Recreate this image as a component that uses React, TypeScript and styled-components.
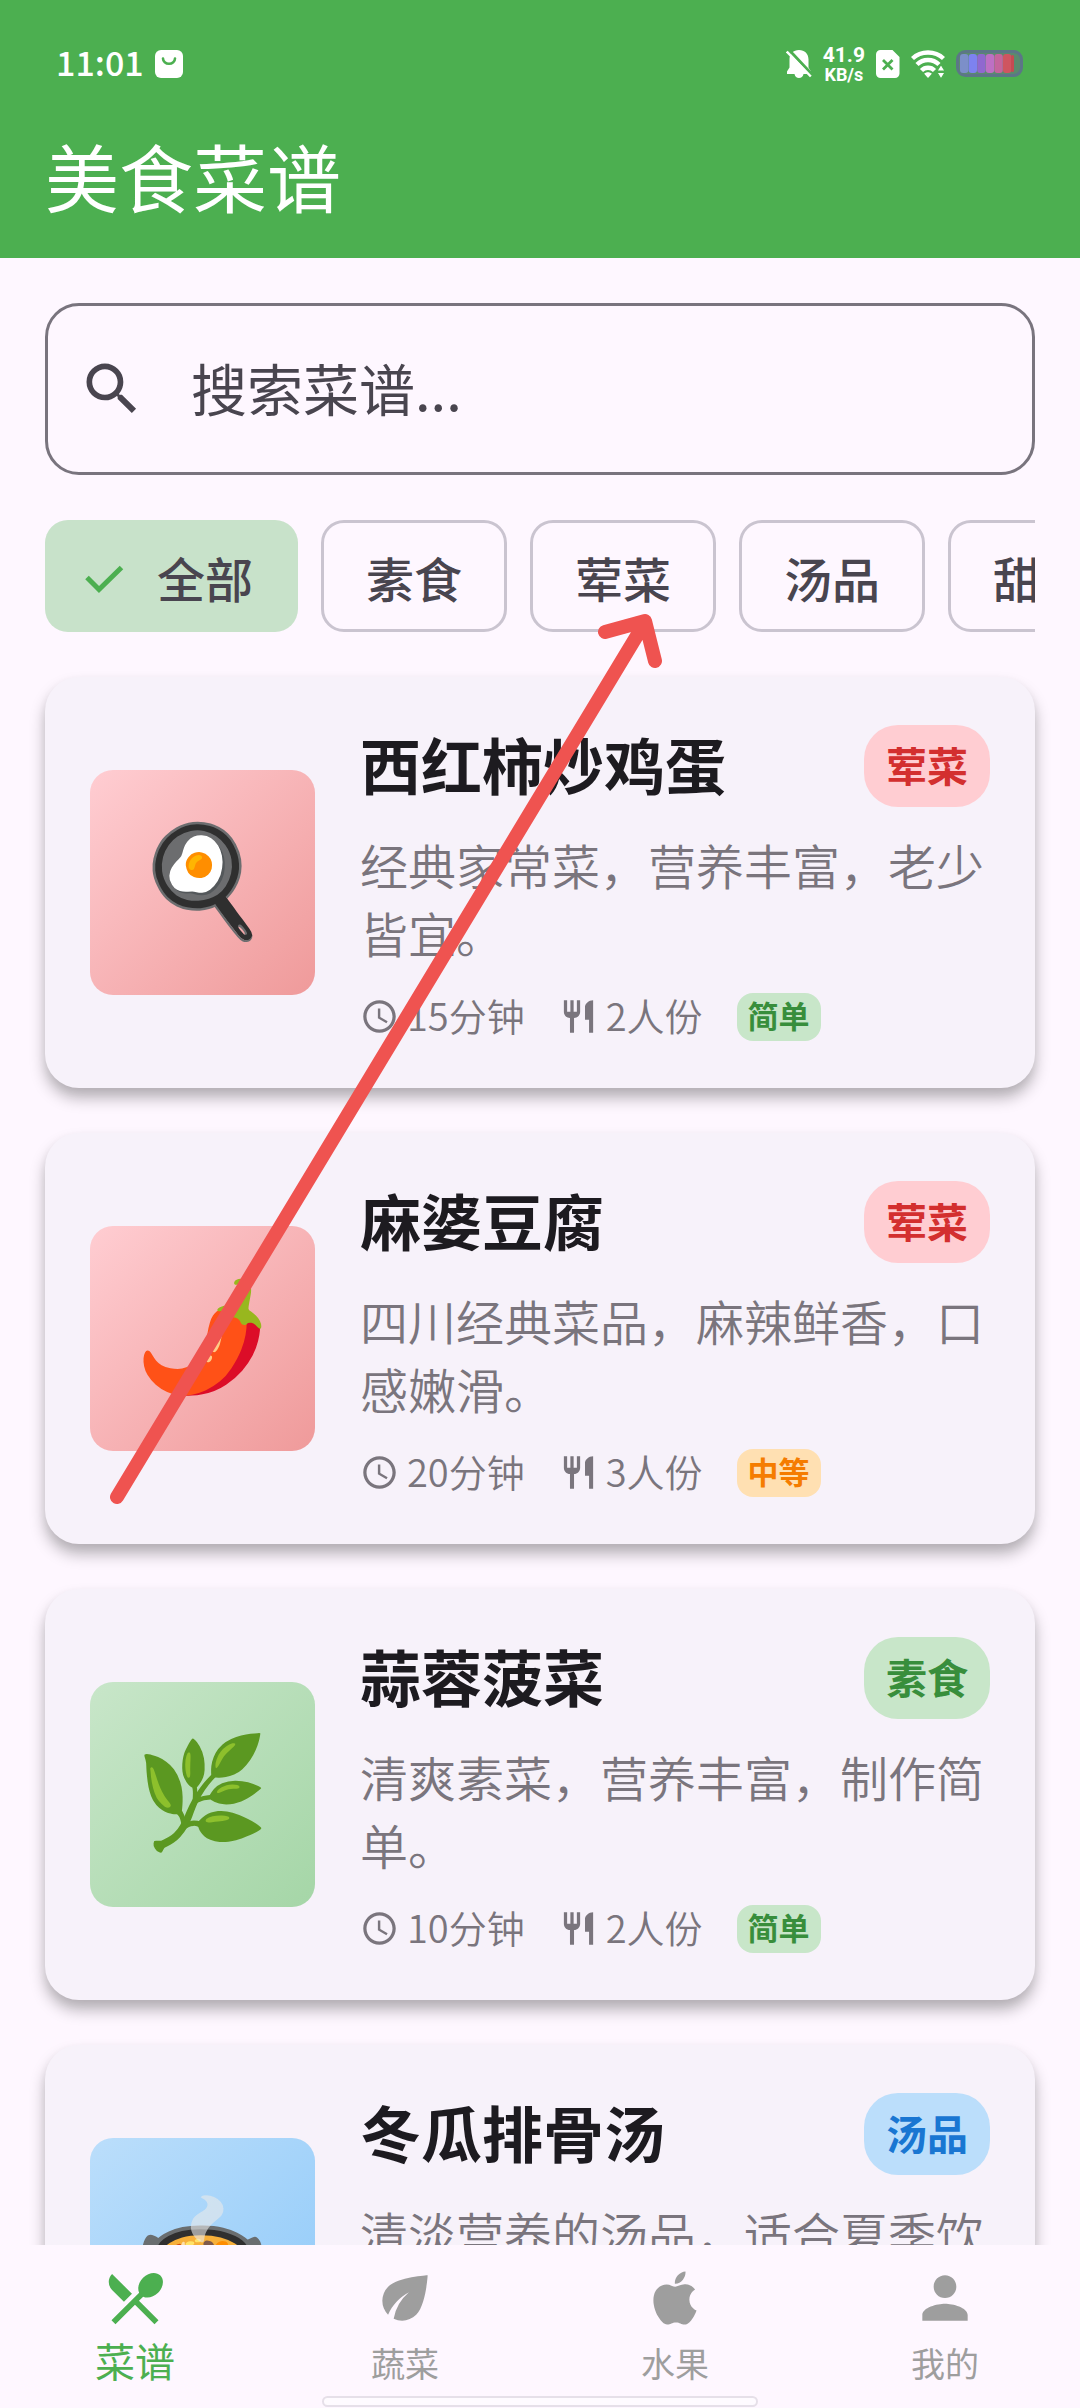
import React, { useState } from 'react';
import styled, { createGlobalStyle } from 'styled-components';
import {
  MdAccessTime,
  MdEco,
  MdPerson,
  MdRestaurant,
  MdRestaurantMenu,
  MdSearch,
} from 'react-icons/md';

const GlobalStyle = createGlobalStyle`
  * { box-sizing: border-box; }
  body {
    margin: 0;
    background: #fef7ff;
    font-family: "Noto Sans CJK SC", "Noto Sans", sans-serif;
    color: #1d1b20;
  }
  button, input { font: inherit; color: inherit; }
`;

const Screen = styled.div`
  position: relative;
  display: flex;
  flex-direction: column;
  height: 100vh;
  overflow: hidden;
  background: #fef7ff;
`;

const AppBar = styled.header`
  flex: none;
  padding: 40px 45px 28px;
  background: #4caf50;
  color: #ffffff;
`;

const StatusBar = styled.div`
  display: flex;
  align-items: center;
  justify-content: space-between;
  height: 48px;
  padding: 0 12px 0 11px;
`;

const StatusGroup = styled.div`
  display: flex;
  align-items: center;
  gap: 11px;
`;

const Clock = styled.span`
  padding-bottom: 4px;
  font-size: 34px;
  line-height: 48px;
  font-weight: 500;
`;

const NetSpeed = styled.span`
  display: flex;
  flex-direction: column;
  align-items: center;
  font-family: Roboto, sans-serif;
  font-weight: 700;
  font-size: 21px;
  line-height: 22px;
`;

const NetUnit = styled.span`
  font-size: 18px;
  line-height: 18px;
`;

const PageTitle = styled.h1`
  margin: 32px 0 0;
  font-size: 74px;
  line-height: 110px;
  font-weight: 400;
`;

const Main = styled.main`
  flex: 1;
  min-height: 0;
  display: flex;
  flex-direction: column;
  padding-top: 45px;
`;

const SearchBox = styled.label`
  flex: none;
  display: flex;
  align-items: center;
  gap: 45px;
  height: 172px;
  margin: 0 45px;
  padding: 0 30px;
  border: 3px solid #79747e;
  border-radius: 34px;
  color: #49454f;

  svg { flex: none; }
`;

const SearchInput = styled.input`
  flex: 1;
  min-width: 0;
  padding: 0 0 4px;
  border: 0;
  outline: 0;
  background: transparent;
  font-size: 56px;
  line-height: 84px;

  &::placeholder { color: #49454f; opacity: 1; }
`;

const ChipRow = styled.div`
  flex: none;
  display: flex;
  gap: 23px;
  margin: 45px 45px 0;
  overflow: hidden;
`;

const Chip = styled.button<{ $selected: boolean }>`
  flex: none;
  display: flex;
  align-items: center;
  gap: 28px;
  height: 112px;
  padding: ${(p) => (p.$selected ? '2px 45px 0 33px' : '2px 42px 0')};
  border: ${(p) => (p.$selected ? '0' : '3px solid #cac4d0')};
  border-radius: 23px;
  background: ${(p) => (p.$selected ? '#c8e2ca' : 'transparent')};
  color: #49454f;
  font-size: 48px;
  line-height: 68px;
  font-weight: 500;
  white-space: nowrap;
`;

const List = styled.ul`
  flex: 1;
  min-height: 0;
  display: flex;
  flex-direction: column;
  gap: 45px;
  margin: 0;
  padding: 45px 45px 0;
  overflow: hidden;
  list-style: none;
`;

const Card = styled.li`
  flex: none;
  display: flex;
  align-items: center;
  gap: 45px;
  padding: 45px;
  border-radius: 34px;
  background: #f7f2fa;
  box-shadow: 0 10px 15px rgba(0, 0, 0, 0.28), 0 4px 10px rgba(0, 0, 0, 0.04);
`;

const Thumb = styled.div<{ $from: string; $to: string }>`
  flex: none;
  display: flex;
  align-items: center;
  justify-content: center;
  width: 225px;
  height: 225px;
  padding-bottom: 4px;
  border-radius: 23px;
  background: linear-gradient(135deg, ${(p) => p.$from}, ${(p) => p.$to});
  font-family: "Noto Color Emoji", sans-serif;
  font-size: 108px;
  line-height: 120px;
`;

const Body = styled.div`
  flex: 1;
  min-width: 0;
  display: flex;
  flex-direction: column;
`;

const TitleRow = styled.div`
  display: flex;
  align-items: center;
  justify-content: space-between;
  height: 88px;
`;

const Name = styled.h2`
  margin: 0;
  padding-bottom: 4px;
  font-size: 61px;
  line-height: 84px;
  font-weight: 700;
`;

const KindBadge = styled.span<{ $bg: string; $fg: string }>`
  padding: 0 22px 4px;
  border-radius: 34px;
  background: ${(p) => p.$bg};
  color: ${(p) => p.$fg};
  font-size: 41px;
  line-height: 78px;
  font-weight: 700;
`;

const Desc = styled.p`
  margin: 20px 0 24px;
  color: #7a757d;
  font-size: 48px;
  line-height: 68px;
  font-weight: 350;
`;

const Meta = styled.div`
  display: flex;
  align-items: center;
  gap: 34px;
  height: 53px;
  color: #7a757d;
  font-size: 38px;
  line-height: 48px;
  font-weight: 350;
`;

const MetaItem = styled.span`
  display: flex;
  align-items: center;
  gap: 8px;
`;

const MetaText = styled.span`
  padding-bottom: 4px;
`;

const LevelBadge = styled.span<{ $bg: string; $fg: string }>`
  padding: 0 11px 4px;
  border-radius: 16px;
  background: ${(p) => p.$bg};
  color: ${(p) => p.$fg};
  font-size: 31px;
  line-height: 44px;
  font-weight: 700;
`;

const BottomNav = styled.nav`
  flex: none;
  display: flex;
  flex-direction: column;
  align-items: center;
  padding: 19px 0 1px;
  background: #fef7ff;
`;

const Tabs = styled.div`
  display: grid;
  grid-template-columns: repeat(4, 1fr);
  width: 100%;
`;

const Tab = styled.button<{ $active: boolean }>`
  display: flex;
  flex-direction: column;
  align-items: center;
  padding: 0;
  border: 0;
  background: none;
  color: ${(p) => (p.$active ? '#4caf50' : '#9e9e9e')};
  font-size: 40px;
  line-height: 56px;
`;

const TabLabel = styled.span<{ $active: boolean }>`
  display: block;

  span {
    font-size: ${(p) => (p.$active ? '40px' : '34px')};
    line-height: 40px;
  }
`;

const HomeBar = styled.div`
  width: 436px;
  max-width: 50%;
  height: 11px;
  margin-top: 8px;
  border: 2px solid #e6e0e9;
  border-radius: 6px;
  background: #fefbff;
`;

const Arrow = styled.svg`
  position: absolute;
  left: 0;
  top: 0;
  pointer-events: none;
`;

const tones = {
  meat: { from: '#ffcdd2', to: '#ef9a9a', bg: '#ffcdd2', fg: '#d32f2f' },
  veg: { from: '#c8e6c9', to: '#a5d6a7', bg: '#c8e6c9', fg: '#388e3c' },
  soup: { from: '#bbdefb', to: '#90caf9', bg: '#bbdefb', fg: '#1976d2' },
};

const levels: Record<string, { bg: string; fg: string }> = {
  简单: { bg: '#c8e6c9', fg: '#388e3c' },
  中等: { bg: '#ffe0b2', fg: '#f57c00' },
};

type Recipe = {
  name: string;
  kind: string;
  tone: keyof typeof tones;
  icon: string;
  desc: string;
  time: string;
  serves: string;
  level: string;
};

const recipes: Recipe[] = [
  { name: '西红柿炒鸡蛋', kind: '荤菜', tone: 'meat', icon: '🍳', desc: '经典家常菜，营养丰富，老少皆宜。', time: '15分钟', serves: '2人份', level: '简单' },
  { name: '麻婆豆腐', kind: '荤菜', tone: 'meat', icon: '🌶️', desc: '四川经典菜品，麻辣鲜香，口感嫩滑。', time: '20分钟', serves: '3人份', level: '中等' },
  { name: '蒜蓉菠菜', kind: '素食', tone: 'veg', icon: '🌿', desc: '清爽素菜，营养丰富，制作简单。', time: '10分钟', serves: '2人份', level: '简单' },
  { name: '冬瓜排骨汤', kind: '汤品', tone: 'soup', icon: '🍲', desc: '清淡营养的汤品，适合夏季饮用。', time: '60分钟', serves: '4人份', level: '中等' },
];

const categories = ['全部', '素食', '荤菜', '汤品', '甜品'];

function CheckIcon() {
  return (
    <svg width="51" height="51" viewBox="0 0 51 51" aria-hidden="true">
      <path d="M9 25.5L21 37.5L43.5 15.5" fill="none" stroke="#4caf50" strokeWidth="5" />
    </svg>
  );
}

function AppleIcon({ size }: { size: number }) {
  return (
    <svg width={size} height={size} viewBox="-0.8 -0.8 25.6 25.6" fill="currentColor" aria-hidden="true">
      <path d="M18.71 19.5c-.83 1.24-1.71 2.45-3.05 2.47-1.34.03-1.77-.79-3.29-.79-1.53 0-2 .77-3.27.82-1.31.05-2.3-1.32-3.14-2.53C4.25 17 2.94 12.45 4.7 9.39c.87-1.52 2.43-2.48 4.12-2.51 1.28-.02 2.5.87 3.29.87.78 0 2.26-1.07 3.81-.91.65.03 2.47.26 3.64 1.98-.09.06-2.17 1.28-2.15 3.81.03 3.02 2.65 4.03 2.68 4.04-.03.07-.42 1.44-1.38 2.83M13 3.5c.73-.83 1.94-1.46 2.94-1.5.13 1.17-.34 2.35-1.04 3.19-.69.85-1.83 1.51-2.95 1.42-.11-1.15.41-2.35 1.05-3.11z" />
    </svg>
  );
}

const tabs = [
  { label: '菜谱', Icon: MdRestaurantMenu },
  { label: '蔬菜', Icon: MdEco },
  { label: '水果', Icon: AppleIcon },
  { label: '我的', Icon: MdPerson },
];

function BagIcon() {
  return (
    <svg width="28" height="28" viewBox="0 0 28 28" aria-hidden="true">
      <rect width="28" height="28" rx="6" fill="#fff" />
      <path d="M8 8.500a6 5.200 0 0 0 12 0" fill="none" stroke="#4caf50" strokeWidth="2.600" strokeLinecap="round" />
    </svg>
  );
}

function BellOffIcon() {
  return (
    <svg width="26" height="28" viewBox="0 0 26 28" aria-hidden="true">
      <path
        d="M13 0c5.600 0 9.500 3.800 9.500 9.500v8l2.500 4v2.500h-7.500c-.4 2.400-2.200 4-4.500 4s-4.100-1.600-4.500-4H1v-2.500l2.500-4v-8c0-5.700 3.900-9.500 9.500-9.500z"
        fill="#fff"
      />
      <path d="M3.500 0.500l22.500 24" stroke="#4caf50" strokeWidth="3" />
      <path d="M0.800 1.500l24 25" stroke="#fff" strokeWidth="2.400" />
    </svg>
  );
}

function SimIcon() {
  return (
    <svg width="24" height="28" viewBox="0 0 24 28" aria-hidden="true">
      <path d="M4.500 0h12L23.500 7v16.500a4.500 4.500 0 0 1-4.500 4.500h-14.500a4.500 4.500 0 0 1-4.500-4.500v-19a4.500 4.500 0 0 1 4.500-4.500z" fill="#fff" />
      <path d="M7 10l9.500 9.500M16.500 10l-9.500 9.500" stroke="#4caf50" strokeWidth="2.800" />
    </svg>
  );
}

function WifiIcon() {
  return (
    <svg width="34" height="28" viewBox="0 0 34 28" aria-hidden="true">
      <g fill="none" stroke="#fff" strokeWidth="4.400">
        <path d="M1.500 8.500c8.500-8 22.500-8 31 0" />
        <path d="M6 14.500c6-6 16-6 22 0" />
        <path d="M10.500 20.500c3.500-3.600 9.500-3.600 13 0" />
      </g>
      <path d="M17 28l-3.800-4.200c2-2 5.600-2 7.600 0z" fill="#fff" />
      <path d="M26 21l4-6.500 4 6.500zM26 22.500l4 6.500 4-6.500z" fill="#fff" stroke="#4caf50" strokeWidth="1.200" />
    </svg>
  );
}

function BatteryIcon() {
  const cells = ['#7c8fc9', '#7d82f0', '#9068cf', '#bd70c4', '#c4659d', '#cf5560'];
  return (
    <svg width="67" height="28" viewBox="0 0 67 28" aria-hidden="true">
      <rect x="1.500" y="1.500" width="64" height="24" rx="8" fill="#5a8a6e" stroke="#5c7687" strokeWidth="3" />
      {cells.map((color, i) => (
        <rect key={color} x={4 + i * 8.6} y="4" width="8.400" height="19" rx="3" fill={color} />
      ))}
      <rect x="55" y="5" width="3" height="17" rx="1.500" fill="#c64a52" />
    </svg>
  );
}

export default function App() {
  const [category, setCategory] = useState('全部');
  const [tab, setTab] = useState('菜谱');
  const [query, setQuery] = useState('');

  return (
    <Screen>
      <GlobalStyle />
      <AppBar>
        <StatusBar>
          <StatusGroup>
            <Clock>11:01</Clock>
            <BagIcon />
          </StatusGroup>
          <StatusGroup>
            <BellOffIcon />
            <NetSpeed>
              41.9<NetUnit>KB/s</NetUnit>
            </NetSpeed>
            <SimIcon />
            <WifiIcon />
            <BatteryIcon />
          </StatusGroup>
        </StatusBar>
        <PageTitle>美食菜谱</PageTitle>
      </AppBar>

      <Main>
        <SearchBox>
          <MdSearch size={68} aria-hidden="true" />
          <SearchInput
            type="text"
            aria-label="搜索菜谱"
            placeholder="搜索菜谱..."
            value={query}
            onChange={(e) => setQuery(e.target.value)}
          />
        </SearchBox>

        <ChipRow>
          {categories.map((c) => (
            <Chip key={c} type="button" $selected={c === category} aria-pressed={c === category} onClick={() => setCategory(c)}>
              {c === category && <CheckIcon />}
              {c}
            </Chip>
          ))}
        </ChipRow>

        <List>
          {recipes.map((r) => {
            const tone = tones[r.tone];
            const level = levels[r.level];
            return (
              <Card key={r.name}>
                <Thumb $from={tone.from} $to={tone.to}>{r.icon}</Thumb>
                <Body>
                  <TitleRow>
                    <Name>{r.name}</Name>
                    <KindBadge $bg={tone.bg} $fg={tone.fg}>{r.kind}</KindBadge>
                  </TitleRow>
                  <Desc>{r.desc}</Desc>
                  <Meta>
                    <MetaItem>
                      <MdAccessTime size={39} aria-hidden="true" />
                      <MetaText>{r.time}</MetaText>
                    </MetaItem>
                    <MetaItem>
                      <MdRestaurant size={39} aria-hidden="true" />
                      <MetaText>{r.serves}</MetaText>
                    </MetaItem>
                    <LevelBadge $bg={level.bg} $fg={level.fg}>{r.level}</LevelBadge>
                  </Meta>
                </Body>
              </Card>
            );
          })}
        </List>
      </Main>

      <BottomNav>
        <Tabs>
          {tabs.map(({ label, Icon }) => (
            <Tab key={label} type="button" $active={label === tab} onClick={() => setTab(label)}>
              <Icon size={68} aria-hidden="true" />
              <TabLabel $active={label === tab}><span>{label}</span></TabLabel>
            </Tab>
          ))}
        </Tabs>
        <HomeBar />
      </BottomNav>

      <Arrow width="680" height="1520" viewBox="0 0 680 1520" aria-hidden="true">
        <path
          d="M117 1497L644 624M605 632L645 621L655 661"
          fill="none"
          stroke="#ef5350"
          strokeWidth="14"
          strokeLinecap="round"
          strokeLinejoin="round"
        />
      </Arrow>
    </Screen>
  );
}
